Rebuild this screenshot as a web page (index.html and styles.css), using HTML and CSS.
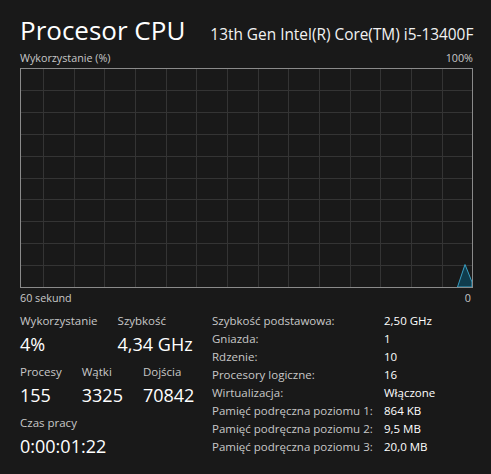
FILE: index.html
```html
<!DOCTYPE html>
<html lang="pl">
<head>
<meta charset="utf-8">
<title>Procesor CPU</title>
<link rel="stylesheet" href="styles.css">
</head>
<body>
<main class="page">
  <header class="title-row">
    <h1 class="title">Procesor CPU</h1>
    <div class="model">13th Gen Intel(R) Core(TM) i5-13400F</div>
  </header>

  <div class="axis-row axis-top"><span>Wykorzystanie (%)</span><span>100%</span></div>

  <svg class="graph" width="453" height="220" viewBox="0 0 453 220" xmlns="http://www.w3.org/2000/svg">
    <g stroke="#343434" stroke-width="1" fill="none">
      <path d="M0.5 22.5H452 M0.5 44.5H452 M0.5 66.5H452 M0.5 88.5H452 M0.5 110.5H452 M0.5 131.5H452 M0.5 153.5H452 M0.5 175.5H452 M0.5 197.5H452"/>
      <path d="M23.5 0.5V219 M54.5 0.5V219 M84.5 0.5V219 M115.5 0.5V219 M146.5 0.5V219 M176.5 0.5V219 M207.5 0.5V219 M238.5 0.5V219 M268.5 0.5V219 M299.5 0.5V219 M330.5 0.5V219 M360.5 0.5V219 M391.5 0.5V219 M422.5 0.5V219"/>
    </g>
    <polygon points="437.5,219 445,196.5 452,214 452,219" fill="#0f3c4d" stroke="#3aa0c4" stroke-width="1"/>
    <rect x="0.5" y="0.5" width="452" height="219" fill="none" stroke="#8a8a8a" stroke-width="1"/>
  </svg>

  <div class="axis-row axis-bottom"><span>60 sekund</span><span>0</span></div>

  <section class="stats">
    <div class="live">
      <div class="stat-row">
        <div class="stat"><div class="label">Wykorzystanie</div><div class="value">4%</div></div>
        <div class="stat"><div class="label">Szybkość</div><div class="value">4,34 GHz</div></div>
      </div>
      <div class="stat-row">
        <div class="stat"><div class="label">Procesy</div><div class="value">155</div></div>
        <div class="stat"><div class="label">Wątki</div><div class="value">3325</div></div>
        <div class="stat"><div class="label">Dojścia</div><div class="value">70842</div></div>
      </div>
      <div class="stat-row">
        <div class="stat"><div class="label">Czas pracy</div><div class="value">0:00:01:22</div></div>
      </div>
    </div>

    <dl class="specs">
      <div class="spec"><dt>Szybkość podstawowa:</dt><dd>2,50 GHz</dd></div>
      <div class="spec"><dt>Gniazda:</dt><dd>1</dd></div>
      <div class="spec"><dt>Rdzenie:</dt><dd>10</dd></div>
      <div class="spec"><dt>Procesory logiczne:</dt><dd>16</dd></div>
      <div class="spec"><dt>Wirtualizacja:</dt><dd>Włączone</dd></div>
      <div class="spec"><dt>Pamięć podręczna poziomu 1:</dt><dd>864 KB</dd></div>
      <div class="spec"><dt>Pamięć podręczna poziomu 2:</dt><dd>9,5 MB</dd></div>
      <div class="spec"><dt>Pamięć podręczna poziomu 3:</dt><dd>20,0 MB</dd></div>
    </dl>
  </section>
</main>
</body>
</html>
```

FILE: styles.css
```css
html, body {
  margin: 0;
  padding: 0;
  background: #191919;
  color: #ffffff;
  font-family: "Open Sans", "Noto Sans", sans-serif;
}

.page {
  width: 453px;
  padding: 0 0 0 20px;
}

.title-row {
  display: flex;
  align-items: baseline;
  gap: 25px;
  height: 42px;
  padding-top: 6px;
  white-space: nowrap;
}

.title {
  margin: 0;
  flex-shrink: 0;
  font-weight: 400;
  font-size: 26px;
  line-height: 48px;
  color: #ffffff;
}

.model {
  flex-shrink: 0;
  font-size: 15.4px;
  color: #f2f2f2;
}

.axis-row {
  display: flex;
  justify-content: space-between;
  font-size: 10.75px;
  color: #c8c8c8;
  line-height: 20px;
}

.axis-top {
  height: 19px;
  padding-top: 1px;
  line-height: 19px;
}

.axis-bottom {
  height: 20px;
  padding-right: 2px;
}

.graph {
  display: block;
}

.stats {
  display: flex;
  padding-top: 3.5px;
}

.live {
  width: 192px;
}

.stat-row {
  display: flex;
  gap: 20px;
  margin-bottom: 5px;
}

.label {
  font-size: 11.5px;
  color: #c8c8c8;
  line-height: 18px;
}

.value {
  font-size: 18px;
  line-height: 28px;
  color: #ffffff;
}

.specs {
  margin: 0;
}

.spec {
  display: flex;
  font-size: 11.5px;
  line-height: 18.1px;
}

.spec dt {
  width: 172px;
  color: #c8c8c8;
}

.spec dd {
  margin: 0;
  color: #ffffff;
}
```
